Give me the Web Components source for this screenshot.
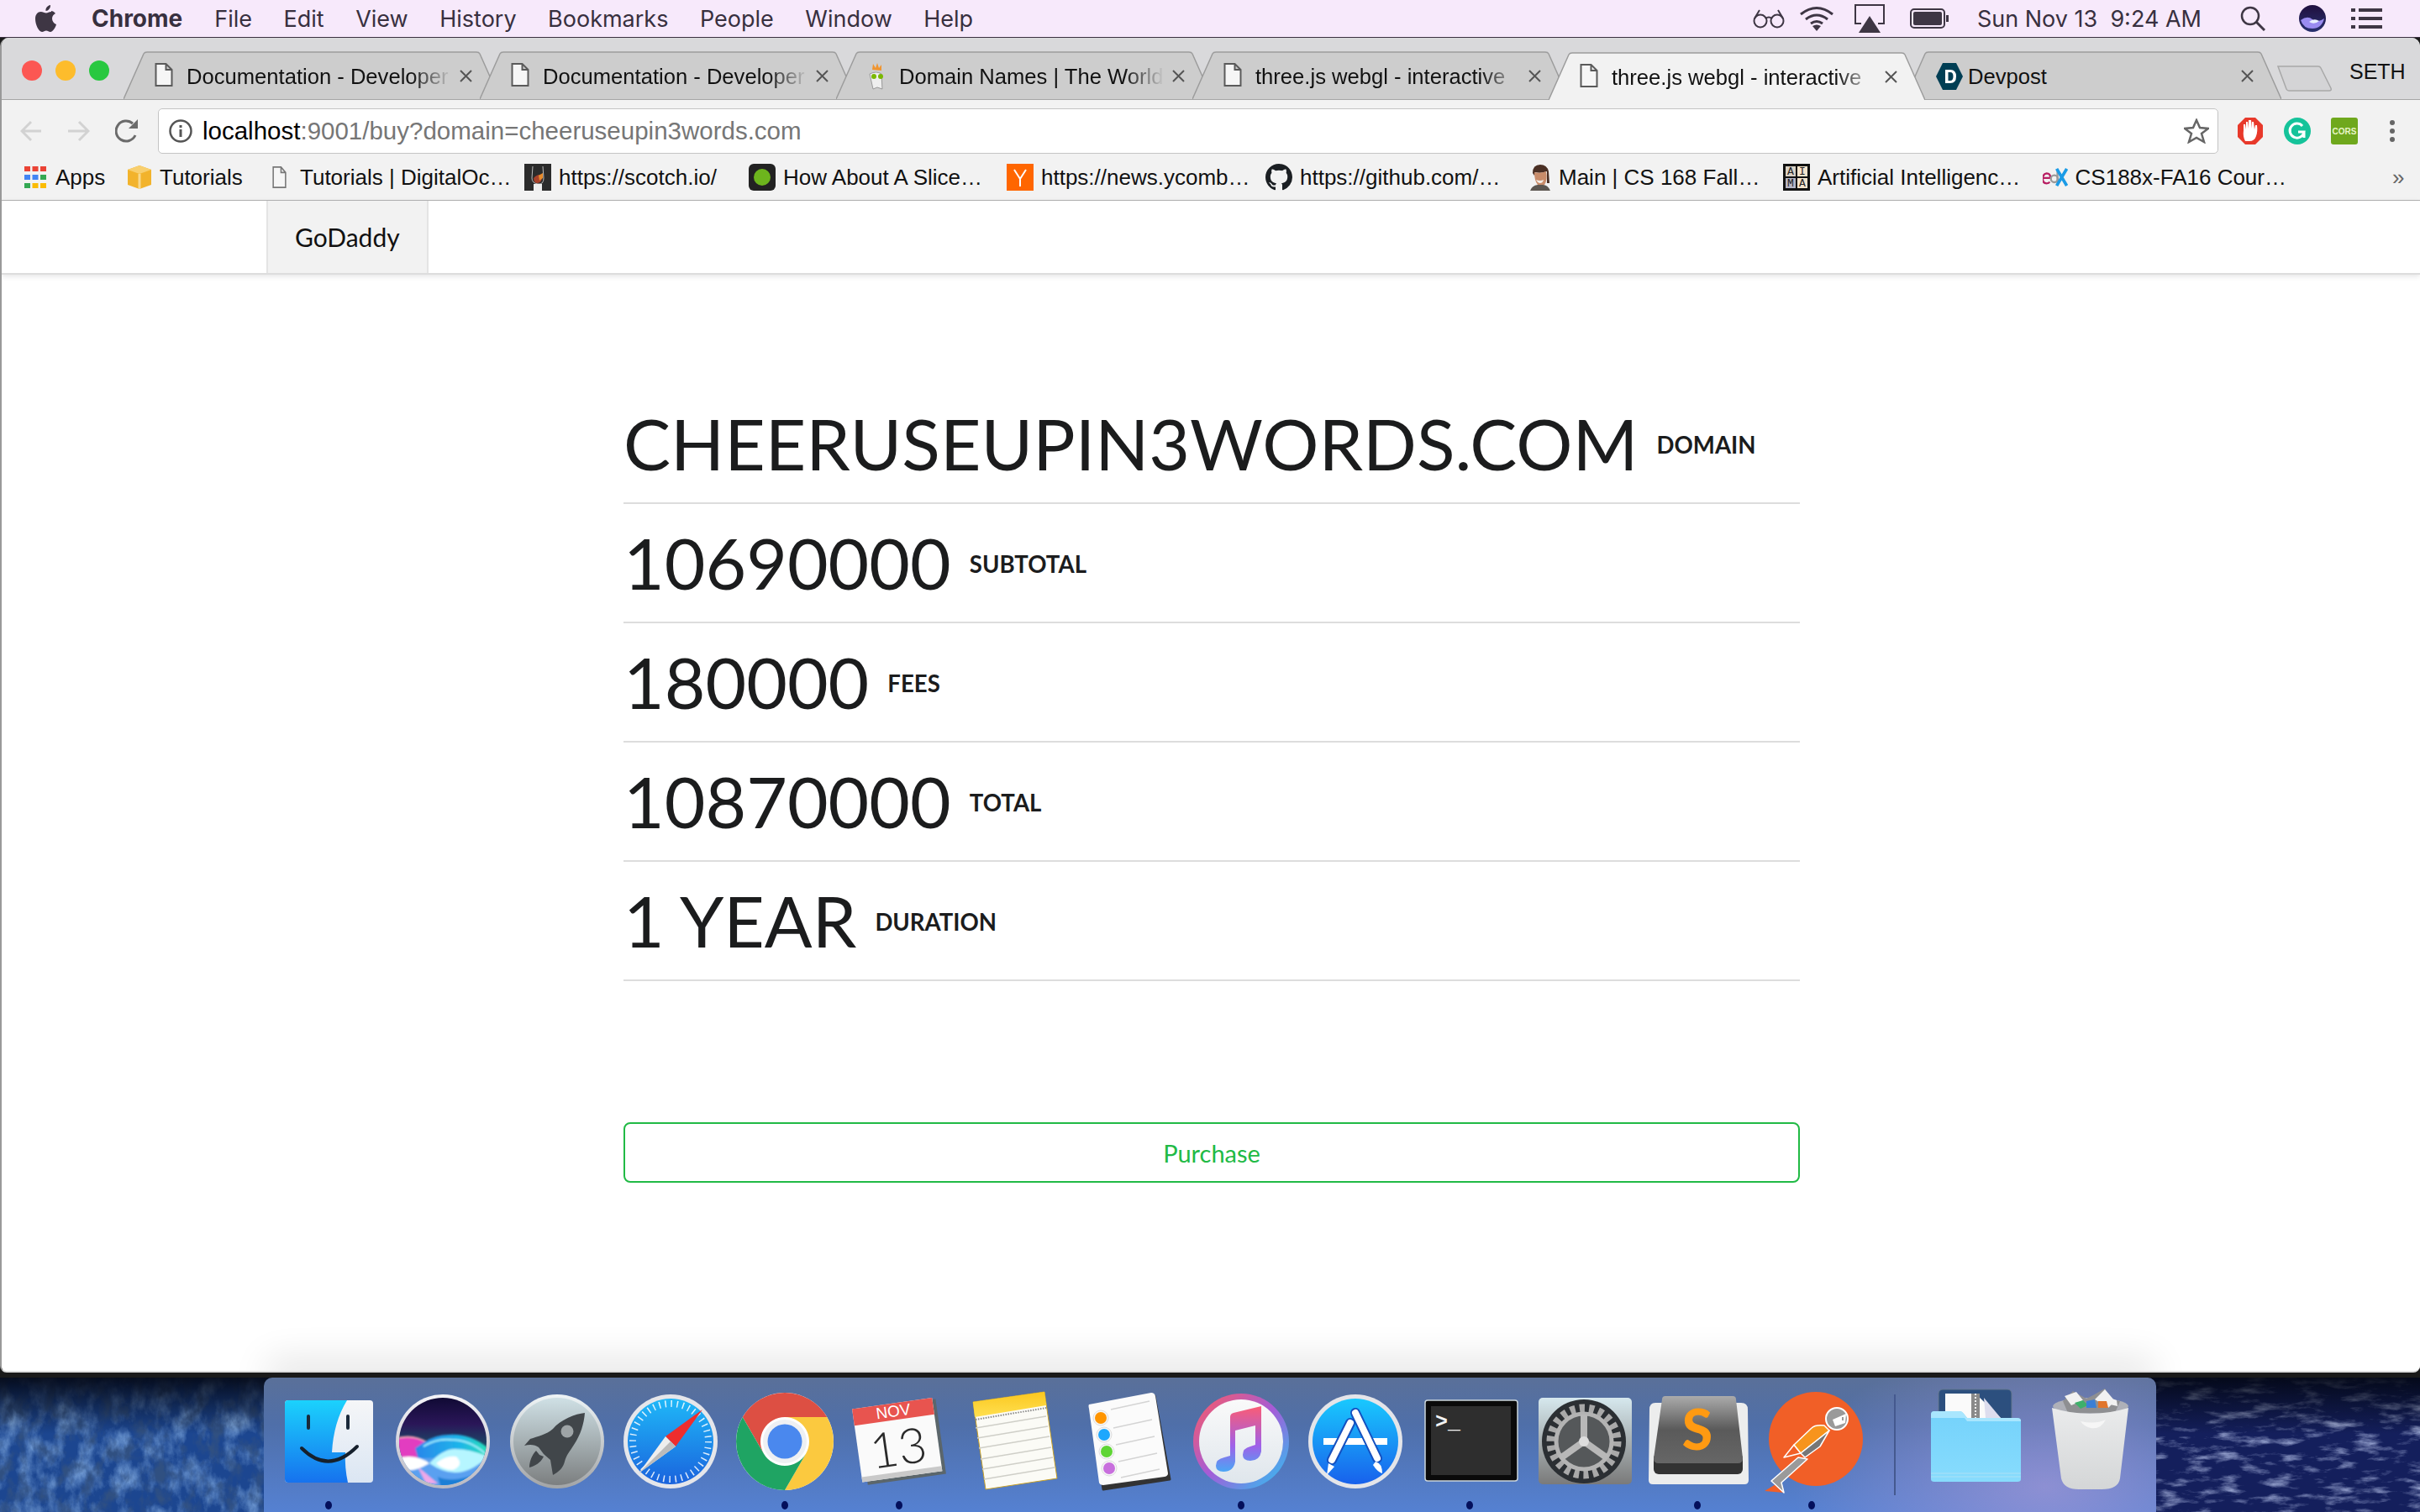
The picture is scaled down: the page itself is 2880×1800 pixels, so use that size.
<!DOCTYPE html>
<html>
<head>
<meta charset="utf-8">
<title>Buy domain</title>
<style>
  html, body { margin: 0; width: 2880px; height: 1800px; overflow: hidden; background: #1a1a1a; }
  body { display: flex; flex-direction: column; font-family: "Liberation Sans", sans-serif; }
  svg { display: block; }
  svg text { font-family: "Liberation Sans", sans-serif; }
</style>
</head>
<body>

<mac-menubar></mac-menubar>

<browser-window>
  <tab-strip>
    <browser-tab label="Documentation - Developer"></browser-tab>
    <browser-tab label="Documentation - Developer"></browser-tab>
    <browser-tab label="Domain Names | The World">
      <svg slot="icon" width="24" height="34" viewBox="0 0 24 34"><path d="M3 14q8-4 14 0l1 18-6-2-5 2z" fill="#eee" stroke="#999"/><path d="M6 9l1-7 3 5 2-6 2 6 3-4 0 7z" fill="#f0952f"/><circle cx="8" cy="17" r="3" fill="#7ab800"/><circle cx="16" cy="17" r="3" fill="#7ab800"/></svg>
    </browser-tab>
    <browser-tab label="three.js webgl - interactive"></browser-tab>
    <browser-tab active label="three.js webgl - interactive"></browser-tab>
    <browser-tab label="Devpost" plain>
      <svg slot="icon" width="32" height="34" viewBox="0 0 32 34"><path d="M8 1h16l8 16-8 16H8L0 17z" fill="#003e54"/><path d="M11 9h6q7 0 7 8t-7 8h-6zM14.500 12v10h2.500q3.500 0 3.500-5t-3.500-5z" fill="#fff" fill-rule="evenodd"/></svg>
    </browser-tab>
  </tab-strip>

  <browser-toolbar url-host="localhost" url-rest=":9001/buy?domain=cheeruseupin3words.com"></browser-toolbar>

  <bookmark-bar>
    <book-mark w="123" label="Apps">
      <svg slot="icon" width="26" height="26" viewBox="0 0 26 26" style="margin-right:2px"><g fill="#ea4335"><rect width="7" height="6"/><rect x="9.500" width="7" height="6"/><rect x="19" width="7" height="6"/></g><g fill="#4285f4"><rect y="10" width="7" height="6"/><rect x="9.500" y="10" width="7" height="6"/></g><rect x="19" y="10" width="7" height="6" fill="#34a853"/><g fill="#34a853"><rect y="20" width="7" height="6"/></g><g fill="#fbbc05"><rect x="9.500" y="20" width="7" height="6"/><rect x="19" y="20" width="7" height="6"/></g></svg>
    </book-mark>
    <book-mark w="172" label="Tutorials">
      <svg slot="icon" width="28" height="28" viewBox="0 0 28 28" style="margin-right:1px"><path d="M14 0l14 5v18l-14 5-14-5V5z" fill="#f2b32c"/><path d="M0 5l14 5 14-5-14-5z" fill="#f8cf6e"/><path d="M12.500 10h3v18h-3z" fill="#f8d98e"/></svg>
    </book-mark>
    <book-mark w="300" label="Tutorials | DigitalOc…"></book-mark>
    <book-mark w="267" label="https://scotch.io/">
      <svg slot="icon" width="32" height="32" viewBox="0 0 32 32"><rect width="32" height="32" fill="#2b2b2b"/><path d="M10 3l-1 14q0 6 7 7t7-7L22 3" fill="none" stroke="#bbb"/><path d="M11 17q5-5 10-4 1 9-5 10-5 0-5-6z" fill="#a8412a"/><path d="M17 14l5-3 0 6-4 3z" fill="#e58a2b"/><rect x="11" y="24" width="10" height="8" fill="#eee"/></svg>
    </book-mark>
    <book-mark w="307" label="How About A Slice…">
      <svg slot="icon" width="32" height="32" viewBox="0 0 32 32"><rect width="32" height="32" rx="6" fill="#222"/><circle cx="16" cy="16" r="10" fill="#6db51d"/></svg>
    </book-mark>
    <book-mark w="308" label="https://news.ycomb…">
      <svg slot="icon" width="32" height="32" viewBox="0 0 32 32"><rect width="32" height="32" fill="#ff6600"/><path d="M9 7l7 11 7-11M16 18v9" fill="none" stroke="#fff" stroke-width="2"/></svg>
    </book-mark>
    <book-mark w="312" label="https://github.com/…">
      <svg slot="icon" width="32" height="32" viewBox="0 0 16 16"><path fill="#1b1f23" d="M8 0C3.580 0 0 3.580 0 8c0 3.540 2.290 6.530 5.470 7.590.4.070.55-.17.55-.38 0-.19-.01-.82-.01-1.490-2.010.37-2.530-.49-2.690-.94-.09-.23-.48-.94-.82-1.130-.28-.15-.68-.52-.01-.53.63-.01 1.080.58 1.230.82.720 1.210 1.870.870 2.330.660.070-.520.280-.870.510-1.070-1.780-.2-3.640-.89-3.640-3.950 0-.870.310-1.590.820-2.150-.08-.2-.36-1.020.08-2.120 0 0 .67-.21 2.200.82.640-.18 1.320-.27 2-.27s1.360.09 2 .27c1.530-1.040 2.200-.82 2.200-.82.440 1.100.160 1.920.080 2.120.510.560.820 1.270.820 2.150 0 3.070-1.870 3.750-3.650 3.950.290.250.540.730.540 1.480 0 1.070-.01 1.930-.01 2.200 0 .210.150.460.550.380A8.010 8.010 0 0 0 16 8c0-4.420-3.580-8-8-8z"/></svg>
    </book-mark>
    <book-mark w="304" label="Main | CS 168 Fall…">
      <svg slot="icon" width="28" height="32" viewBox="0 0 28 32"><rect width="28" height="32" fill="#f2f2f2"/><path d="M6 11Q6 1 15 1q8 0 10 8l1 14h-3V9q-7 3-14 1l-1 4z" fill="#4a2f24"/><path d="M8 10q7 2 14-1 2 10-2 16-4 3-8 0-4-5-4-15z" fill="#c98c6a"/><path d="M10 19q5 2 9 0-1 4-4 4t-5-4z" fill="#f2ece5"/><path d="M3 32q2-6 9-7h6q6 0 9 7z" fill="#5c5650"/></svg>
    </book-mark>
    <book-mark w="309" label="Artificial Intelligenc…">
      <svg slot="icon" width="32" height="32" viewBox="0 0 32 32"><rect width="32" height="32" fill="#111"/><rect x="3" y="3" width="12" height="12" fill="#d9d2c6"/><rect x="17" y="3" width="12" height="12" fill="#f4e4cc"/><rect x="3" y="17" width="12" height="12" fill="#b6b6c6"/><rect x="17" y="17" width="12" height="12" fill="#f4e4cc"/><g font-size="13" fill="#222" text-anchor="middle"><text x="9" y="13" style="font-family:'Liberation Mono'">A</text><text x="23" y="13" style="font-family:'Liberation Mono'">I</text><text x="9" y="27" style="font-family:'Liberation Mono'">M</text><text x="23" y="27" style="font-family:'Liberation Mono'">A</text></g></svg>
    </book-mark>
    <book-mark w="290" label="CS188x-FA16 Cour…">
      <svg slot="icon" width="32" height="28" viewBox="0 0 32 28"><path d="M1 15h9q0-6-5-6-5 1-5 7 0 6 5 6 3 0 4-2" fill="none" stroke="#b81f63" stroke-width="2.500"/><circle cx="15" cy="16" r="4.500" fill="none" stroke="#9a9a9a" stroke-width="2.500"/><path d="M19 5v17" stroke="#9a9a9a" stroke-width="2.500"/><path d="M18 3l13 22M31 3L18 25" stroke="#1b9be6" stroke-width="4"/></svg>
    </book-mark>
    <span style="color:#666;font-size:26px;line-height:32px;margin-left:126px">»</span>
  </bookmark-bar>

  <page-nav brand="GoDaddy"></page-nav>

  <page-main>
    <stat-row value="CHEERUSEUPIN3WORDS.COM" label="DOMAIN"></stat-row>
    <stat-row value="10690000" label="SUBTOTAL"></stat-row>
    <stat-row value="180000" label="FEES"></stat-row>
    <stat-row value="10870000" label="TOTAL"></stat-row>
    <stat-row value="1 YEAR" label="DURATION"></stat-row>
    <purchase-button>Purchase</purchase-button>
  </page-main>
</browser-window>

<mac-dock>
  <dock-item running>
    <svg width="136" height="146" viewBox="0 0 136 146"><defs><linearGradient id="fb" x1="0" y1="0" x2="0" y2="1"><stop offset="0" stop-color="#1bd2fd"/><stop offset="1" stop-color="#1672ee"/></linearGradient><linearGradient id="fw" x1="0" y1="0" x2="0" y2="1"><stop offset="0" stop-color="#f5f6f8"/><stop offset="1" stop-color="#dbe6f3"/></linearGradient></defs>
      <rect x="16" y="27" width="105" height="98" rx="4" fill="url(#fw)"/>
      <path d="M20 27h70q-16 26-18 62h16q-1 18 3 36H20q-4 0-4-4V31q0-4 4-4z" fill="url(#fb)"/>
      <path d="M44 46v14M91 46v14" stroke="#1a2a3a" stroke-width="4" stroke-linecap="round"/>
      <path d="M36 84q32 32 66-2" fill="none" stroke="#16202c" stroke-width="4" stroke-linecap="round"/>
    </svg>
  </dock-item>
  <dock-item>
    <svg width="136" height="146" viewBox="0 0 136 146"><defs><linearGradient id="sr" x1="0" y1="0" x2="0" y2="1"><stop offset="0" stop-color="#100a34"/><stop offset=".3" stop-color="#2a1658"/><stop offset=".55" stop-color="#1c4a68"/><stop offset="1" stop-color="#2e8ce8"/></linearGradient><linearGradient id="sc" x1="0" y1="0" x2="1" y2="0"><stop offset="0" stop-color="#2a86ea"/><stop offset=".6" stop-color="#1eb4ea"/><stop offset="1" stop-color="#28e0b8"/></linearGradient><linearGradient id="sg" x1="0" y1="0" x2="0" y2="1"><stop offset="0" stop-color="#f4f4f8"/><stop offset="1" stop-color="#b9b9c2"/></linearGradient><clipPath id="src"><circle cx="68" cy="76" r="52"/></clipPath><filter id="sb1"><feGaussianBlur stdDeviation=".8"/></filter></defs>
      <circle cx="68" cy="76" r="56" fill="url(#sg)"/><circle cx="68" cy="76" r="52" fill="url(#sr)"/>
      <g clip-path="url(#src)" filter="url(#sb1)">
        <path d="M14 72Q32 66 50 78 62 86 72 96L50 104Q30 96 14 94z" fill="#e23cc0"/>
        <path d="M14 72q20-5 36 6" fill="none" stroke="#f4a0b0" stroke-width="2"/>
        <path d="M35 84Q55 68 75 68 100 66 122 84V102H40z" fill="url(#sc)"/>
        <path d="M45 82Q60 72 78 74 100 74 118 90" fill="none" stroke="#9ff0ff" stroke-width="2"/>
        <path d="M14 96H122V130H14z" fill="#5aa0f0"/>
        <path d="M38 106l24 20h-14z" fill="#f0a8e8"/>
        <path d="M14 96Q35 90 52 102 35 112 26 110 18 104 14 96z" fill="#fff"/>
        <path d="M52 102Q68 85 82 85 100 85 122 94 100 114 82 113 68 113 52 102z" fill="#b6f6ff"/>
        <path d="M60 102Q72 92 84 94 94 104 80 110 68 110 60 102z" fill="#fff"/>
        <path d="M62 118Q80 126 110 114L100 132H66z" fill="#1f7fd6"/>
      </g>
    </svg>
  </dock-item>
  <dock-item>
    <svg width="136" height="146" viewBox="0 0 136 146"><defs><linearGradient id="lp" x1="0" y1="0" x2="0" y2="1"><stop offset="0" stop-color="#cfe0e5"/><stop offset="1" stop-color="#7c7f80"/></linearGradient><linearGradient id="lr" x1="0" y1="0" x2="0" y2="1"><stop offset="0" stop-color="#eef4f6"/><stop offset="1" stop-color="#a2a4a6"/></linearGradient></defs>
      <circle cx="68" cy="76" r="56" fill="url(#lr)"/><circle cx="68" cy="76" r="52" fill="url(#lp)"/>
      <path d="M101 42C90 43 72 50 63 61 55 68 45 70 36 73L29 81C36 79 42 80 46 83L52 91 60 98 63 116C70 112 75 108 77 100 79 92 83 88 88 80 96 68 100 55 101 42z" fill="#41464a"/>
      <path d="M43 87C38 92 35 100 35 107 42 105 48 102 52 94L47 92z" fill="#41464a"/>
      <circle cx="80" cy="64" r="7.500" fill="#9ea4a6"/>
    </svg>
  </dock-item>
  <dock-item>
    <svg width="136" height="146" viewBox="0 0 136 146"><defs><linearGradient id="sf" x1="0" y1="0" x2="0" y2="1"><stop offset="0" stop-color="#1fb8f8"/><stop offset="1" stop-color="#1a63dd"/></linearGradient></defs>
      <circle cx="68" cy="76" r="56" fill="#e5e6ea"/><circle cx="68" cy="76" r="51" fill="url(#sf)"/>
      <circle cx="68" cy="76" r="45" fill="none" stroke="#fff" stroke-width="8" stroke-dasharray="1.500 5.570" opacity=".85"/>
      <path d="M106 38L74 82 62 70z" fill="#ee2d2d"/><path d="M30 114L62 70 74 82z" fill="#eee"/><path d="M30 114L74 82 68 76z" fill="#bbb"/>
    </svg>
  </dock-item>
  <dock-item running>
    <svg width="136" height="146" viewBox="0 0 136 146">
      <g transform="translate(68 76)"><circle r="58" fill="#fff"/>
        <path d="M-50.200-29A58 58 0 0 1 50.200-29L0-29A29 29 0 0 0-25.100 14.500Z" fill="#dd4f43"/>
        <path d="M-50.200-29A58 58 0 0 1 50.200-29L0-29A29 29 0 0 0-25.100 14.500Z" fill="#fbc93f" transform="rotate(120)"/>
        <path d="M-50.200-29A58 58 0 0 1 50.200-29L0-29A29 29 0 0 0-25.100 14.500Z" fill="#1fa463" transform="rotate(240)"/>
        <circle r="26" fill="#eef0f3"/><circle r="20.500" fill="#4a88ee"/></g>
    </svg>
  </dock-item>
  <dock-item running>
    <svg width="136" height="146" viewBox="0 0 136 146">
      <g transform="rotate(-8 68 76)"><rect x="24" y="32" width="94" height="90" fill="#5b666b"/><rect x="18" y="30" width="96" height="88" fill="#fafafa"/><rect x="18" y="112" width="96" height="6" fill="#c9c9c9"/><path d="M18 30h96v20H18z" fill="#e8544f"/>
        <text x="66" y="46" font-size="19" fill="#fff" text-anchor="middle">NOV</text>
        <text x="66" y="104" font-size="58" fill="#2a2a2a" text-anchor="middle" style="font-family:Lato;font-weight:300">13</text></g>
    </svg>
  </dock-item>
  <dock-item>
    <svg width="136" height="146" viewBox="0 0 136 146"><defs><linearGradient id="ny" x1="0" y1="0" x2="0" y2="1"><stop offset="0" stop-color="#fbc71f"/><stop offset="1" stop-color="#ffe050"/></linearGradient></defs>
      <path d="M20 29L105 17 120 120 35 133z" fill="#fbfbf6" stroke="#c9a227"/><path d="M20 29L105 17 107 33 22 47z" fill="url(#ny)"/>
      <path d="M23 50l84-14" stroke="#888" stroke-width="2" stroke-dasharray="1.500 1.500"/>
      <path d="M23 60l84-14M25 72l84-14M27 84l84-14M29 97l84-14M31 109l84-14M33 121l84-14" stroke="#cfcfc8" stroke-width="1.500" fill="none"/>
    </svg>
  </dock-item>
  <dock-item>
    <svg width="136" height="146" viewBox="0 0 136 146">
      <path d="M25 35L101 22 119 121 40 133z" fill="#333" stroke="#333" stroke-width="3" stroke-linejoin="round"/>
      <path d="M23 32L97 18Q101 18 102 22L117 114Q117 117 113 118L40 128Q36 128 35 125L23 37Q22 33 23 32z" fill="#fbfbfb"/>
      <g stroke="#ddd" stroke-width="1"><circle cx="37" cy="48" r="9" fill="#f7f7f7"/><circle cx="41" cy="68" r="9" fill="#f7f7f7"/><circle cx="44" cy="88" r="9" fill="#f7f7f7"/><circle cx="47" cy="108" r="9" fill="#f7f7f7"/></g>
      <circle cx="37" cy="48" r="7" fill="#ff9500"/><circle cx="41" cy="68" r="7" fill="#1ea7fd"/><circle cx="44" cy="88" r="7" fill="#5fd534"/><circle cx="47" cy="108" r="7" fill="#c86fdd"/>
      <path d="M49 38l46-10M52 60l46-10M55 80l46-10M58 100l46-10M61 119l46-10" stroke="#d4d4d4" stroke-width="1.500"/>
    </svg>
  </dock-item>
  <dock-item running>
    <svg width="136" height="146" viewBox="0 0 136 146"><defs><linearGradient id="it" x1="0" y1="0" x2="1" y2="1"><stop offset="0" stop-color="#ff5a5f"/><stop offset=".5" stop-color="#a45cd8"/><stop offset="1" stop-color="#25c9f4"/></linearGradient><linearGradient id="nt" x1="0" y1="0" x2="0" y2="1"><stop offset="0" stop-color="#fb5c74"/><stop offset=".6" stop-color="#a060e8"/><stop offset="1" stop-color="#4aa6f5"/></linearGradient><linearGradient id="iw" x1="0" y1="0" x2="0" y2="1"><stop offset="0" stop-color="#fafafa"/><stop offset="1" stop-color="#dfe6ec"/></linearGradient></defs>
      <circle cx="68" cy="76" r="57" fill="url(#it)"/><circle cx="68" cy="76" r="50" fill="url(#iw)"/>
      <path d="M55 47q0-4 4-5l33-8v54q-2 11-13 11-9 0-9-7 0-8 9-10l6-2V57l-24 6v37q-2 12-14 12-9 0-9-7 0-8 10-10l7-2z" fill="url(#nt)"/>
    </svg>
  </dock-item>
  <dock-item>
    <svg width="136" height="146" viewBox="0 0 136 146"><defs><linearGradient id="as" x1="0" y1="0" x2="0" y2="1"><stop offset="0" stop-color="#19c9fe"/><stop offset="1" stop-color="#1861ec"/></linearGradient></defs>
      <circle cx="68" cy="76" r="56" fill="#e4e5e9"/><circle cx="68" cy="76" r="51" fill="url(#as)"/>
      <path d="M30 72h76v8H30z" fill="#fff"/>
      <path d="M62 54L40 98" stroke="#1450c0" stroke-width="12" stroke-linecap="round"/><path d="M62 54L40 98" stroke="#fff" stroke-width="8" stroke-linecap="round"/><path d="M36 102l-2 14 9-10z" fill="#fff"/>
      <path d="M68 42L94 96" stroke="#1450c0" stroke-width="12" stroke-linecap="round"/><path d="M68 42L94 96" stroke="#fff" stroke-width="8" stroke-linecap="round"/><path d="M92 100q8 2 8 14-6-2-11-10z" fill="#fff"/>
    </svg>
  </dock-item>
  <dock-item running>
    <svg width="136" height="146" viewBox="0 0 136 146">
      <rect x="15" y="27" width="110" height="96" rx="3" fill="#0a0a0a" stroke="#ccd6dc" stroke-width="1.500"/><rect x="22" y="34" width="95" height="82" fill="#2e2e2e"/>
      <text x="27" y="60" font-size="25" font-weight="700" fill="#f2f2f2" style="font-family:'Liberation Mono'">&gt;_</text>
    </svg>
  </dock-item>
  <dock-item>
    <svg width="136" height="146" viewBox="0 0 136 146"><defs><linearGradient id="sp" x1="0" y1="0" x2="0" y2="1"><stop offset="0" stop-color="#d6e8ee"/><stop offset=".5" stop-color="#a8b0b2"/><stop offset="1" stop-color="#7a7a7a"/></linearGradient></defs>
      <rect x="14" y="24" width="111" height="103" rx="5" fill="url(#sp)"/><circle cx="68" cy="76" r="50" fill="#2b2f33"/>
      <circle cx="68" cy="76" r="39" fill="none" stroke="#a9a9a9" stroke-width="11" stroke-dasharray="6 5.150"/><circle cx="68" cy="76" r="33" fill="#55585a" stroke="#b3b3b3" stroke-width="5"/>
      <path d="M68 76V44M68 76L40 96M68 76L96 96" stroke="#b8b8b8" stroke-width="8" fill="none"/><circle cx="68" cy="76" r="6" fill="#ddd"/>
    </svg>
  </dock-item>
  <dock-item running>
    <svg width="136" height="146" viewBox="0 0 136 146"><defs><linearGradient id="sb" x1="0" y1="0" x2="0" y2="1"><stop offset="0" stop-color="#ababab"/><stop offset=".5" stop-color="#5a5a5a"/><stop offset="1" stop-color="#666"/></linearGradient></defs>
      <path d="M18 30H120q8 0 8 8l1 84q0 5-5 5H15q-5 0-5-5l1-84q0-8 7-8z" fill="#eceded"/>
      <rect x="16" y="90" width="106" height="25" rx="6" fill="#333"/>
      <path d="M26 26q0-4 4-4h80q4 0 4 4l8 70q0 6-6 6H22q-6 0-6-6z" fill="url(#sb)"/>
      <text x="68" y="86" font-size="66" font-weight="900" fill="#ff9a12" text-anchor="middle" style="font-family:Lato">S</text>
    </svg>
  </dock-item>
  <dock-item running>
    <svg width="136" height="146" viewBox="0 0 136 146">
      <circle cx="73" cy="73" r="56" fill="#f15f27"/><path d="M12 135l15-9 8 11z" fill="#f15f27"/>
      <path d="M52 95L20 123 35 137 32 125 63 97z" fill="#9a9a9a" stroke="#fff" stroke-width="1.500" stroke-linejoin="round"/>
      <path d="M47 80L35 95 55 90z" fill="#f15f27" stroke="#fff" stroke-width="1.500" stroke-linejoin="round"/>
      <path d="M83 57Q72 56 68 60L47 80 55 90 89 63z" fill="#f7941d" stroke="#fff" stroke-width="1.500" stroke-linejoin="round"/>
      <path d="M89 63L78 82 60 95 55 90z" fill="#777" stroke="#fff" stroke-width="1.500" stroke-linejoin="round"/>
      <circle cx="98" cy="49" r="13" fill="#9a9a9a" stroke="#fff" stroke-width="2"/>
      <path d="M93 50L109 43 108 54 96 58z" fill="#fff"/><path d="M105 47v4" stroke="#777" stroke-width="1.500"/>
    </svg>
  </dock-item>
  <dock-sep></dock-sep>
  <dock-item>
    <svg width="136" height="146" viewBox="0 0 136 146"><defs><linearGradient id="fd" x1="0" y1="0" x2="0" y2="1"><stop offset="0" stop-color="#74d2fb"/><stop offset="1" stop-color="#88dcfd"/></linearGradient></defs>
      <rect x="22" y="14" width="87" height="40" rx="5" fill="#2c4f7e" stroke="#64788f"/>
      <path d="M30 19H66L96 48V60H30z" fill="#fafafa"/><path d="M76 24L96 48H78z" fill="#dde"/>
      <path d="M61 19h10v40h-10z" fill="#8a8a8a"/><path d="M66 19v40" stroke="#eee" stroke-width="2" stroke-dasharray="2 2"/>
      <path d="M17 40h30q3 0 5 3l4 5h59q5 0 5 4v69q0 3-4 3H17q-4 0-4-3V44q0-4 4-4z" fill="url(#fd)"/><path d="M13 48h40l3 4h64v-1q0-3-5-3H56l-4-5q-2-3-5-3H17q-4 0-4 4z" fill="#a9e6fe"/><path d="M13 114h107M13 118h107" stroke="#a0e0f8" stroke-width="1.500"/>
    </svg>
  </dock-item>
  <dock-item>
    <svg width="136" height="146" viewBox="0 0 136 146"><defs><linearGradient id="tr" x1="0" y1="0" x2="0" y2="1"><stop offset="0" stop-color="#eaebec"/><stop offset="1" stop-color="#d4d6d7"/></linearGradient></defs>
      <ellipse cx="67" cy="34" rx="45" ry="10" fill="#aeb0b8"/>
      <path d="M34 28l12-12 16 9 8-4 14-8 8 13 10 2-6 14H40z" fill="#8e8f92"/>
      <path d="M36 22l14-5 8 10-14 6zM72 26l12-12 12 14-8 8zM90 24l8 3 1 7-9-2z" fill="#f1f1f1"/>
      <path d="M48 30l10-3 6 6-9 4z" fill="#3eb06a"/><path d="M62 28l10-2 2 10H62z" fill="#3a7fd6"/><path d="M76 28h10l2 8H76z" fill="#e0752c"/>
      <path d="M21 36Q66 50 112 36L102 120Q100 133 80 133H53Q35 133 32 120z" fill="url(#tr)"/>
      <path d="M55 52q18 4 30-2-6 12-18 10-8-2-12-8z" fill="#f6f6f6"/>
    </svg>
  </dock-item>
</mac-dock>

<script>
const DOC_ICON = `<svg width="22" height="28" viewBox="0 0 22 28"><path d="M1.500 1h12l7 7v19h-19zM13.500 1v7h7" fill="#f6f6f6" stroke="#5a5a5a" stroke-width="2"/></svg>`;

class MacMenubar extends HTMLElement {
  constructor() {
    super();
    this.attachShadow({ mode: 'open' }).innerHTML = `
      <style>
        :host { display: flex; align-items: center; height: 44px; flex: none; background: #f7e9fb; color: #38303f; border-bottom: 1px solid #3b3040; font: 27px Inter, "Noto Sans", sans-serif; padding-left: 41px; }
        .apple { width: 28px; margin-right: 40px; }
        b { font-weight: 700; font-size: 28px; margin-right: 38px; }
        span.m { margin-right: 37.500px; }
        .right { display: flex; align-items: center; margin-left: auto; }
      </style>
      <svg class="apple" viewBox="0 0 28 34" height="34"><path fill="#3e3644" d="M20 9c-3 0-4 1.500-6 1.500S10 9 7.500 9C4 9 1 12 1 17.500 1 24 5 33 9 33c2 0 3-1.500 5-1.500s3 1.500 5 1.500c3 0 6-5.500 7-9-3-1-5-4-5-7 0-3 2-5 4-6-1.500-2-3.500-3-5-3zM19 1c-3 .5-6 3-5.500 7 3 0 6-3.500 5.500-7z"/></svg>
      <b>Chrome</b><span class="m">File</span><span class="m">Edit</span><span class="m">View</span><span class="m">History</span><span class="m">Bookmarks</span><span class="m">People</span><span class="m">Window</span><span class="m">Help</span>
      <div class="right">
        <svg width="38" height="24" viewBox="0 0 38 24" style="margin-right:17px"><g fill="none" stroke="#3e3644" stroke-width="2"><circle cx="9" cy="15" r="7.500"/><circle cx="29" cy="15" r="7.500"/><path d="M15 12q4-3 8 0M2 12L8 2M36 12L30 2"/></g></svg>
        <svg width="42" height="30" viewBox="0 0 42 30" style="margin-right:24px"><g fill="none" stroke="#3e3644" stroke-width="3"><path d="M2 10q19-15 38 0M8 16q13-10 26 0M14 21q7-5 14 0"/></g><path d="M21 30l-5-6q5-3 10 0z" fill="#3e3644"/></svg>
        <svg width="36" height="34" viewBox="0 0 36 34" style="margin-right:30px"><path d="M8 23H1V1h34v22h-7" fill="none" stroke="#3e3644" stroke-width="2"/><path d="M18 14l13 20H5z" fill="#3e3644"/></svg>
        <svg width="46" height="24" viewBox="0 0 46 24" style="margin-right:34px"><rect x="1" y="1" width="40" height="22" rx="4" fill="none" stroke="#3e3644" stroke-width="2"/><rect x="4" y="4" width="34" height="16" rx="2" fill="#3e3644"/><rect x="43" y="8" width="3" height="8" fill="#3e3644"/></svg>
        <span style="margin-right:46px">Sun Nov 13&nbsp; 9:24 AM</span>
        <svg width="30" height="30" viewBox="0 0 30 30" style="margin-right:40px"><circle cx="12" cy="12" r="10" fill="none" stroke="#3e3644" stroke-width="2.500"/><path d="M19 19l10 10" stroke="#3e3644" stroke-width="3"/></svg>
        <svg width="32" height="32" viewBox="0 0 32 32" style="margin-right:30px"><defs><linearGradient id="ms" x1="0" y1="0" x2="0" y2="1"><stop offset="0" stop-color="#20103f"/><stop offset="1" stop-color="#28306f"/></linearGradient></defs><circle cx="16" cy="16" r="16" fill="url(#ms)"/><path d="M2 18q8-6 14-1t14-1q-3 12-14 12T2 18z" fill="#9a8cf0"/><path d="M12 20q6-5 12-1-6 5-12 1z" fill="#e9f0ff"/></svg>
        <svg width="37" height="24" viewBox="0 0 37 24" style="margin-right:45px"><g fill="#3e3644"><rect width="5" height="4"/><rect x="9" width="28" height="4"/><rect y="10" width="5" height="4"/><rect x="9" y="10" width="28" height="4"/><rect y="20" width="5" height="4"/><rect x="9" y="20" width="28" height="4"/></g></svg>
      </div>`;
  }
}

class BrowserWindow extends HTMLElement {
  constructor() {
    super();
    this.attachShadow({ mode: 'open' }).innerHTML = `
      <style>
        :host { display: flex; flex-direction: column; height: 1589px; flex: none; background: #fff; border-left: 2px solid #999; border-bottom: 2px solid #ddd; box-sizing: border-box; border-radius: 10px 10px 8px 8px; overflow: hidden; }
      </style>
      <slot></slot>`;
  }
}

class TabStrip extends HTMLElement {
  constructor() {
    super();
    this.attachShadow({ mode: 'open' }).innerHTML = `
      <style>
        :host { display: flex; align-items: flex-end; height: 74px; flex: none; box-sizing: border-box; background: #d9d9db; border-bottom: 1px solid #a6a6a6; padding-left: 145px; position: relative; }
        .dots { position: absolute; left: 24px; top: 27px; display: flex; gap: 16px; }
        .dots i { width: 24px; height: 24px; border-radius: 50%; }
        .new { margin: 0 0 9px 19px; flex: none; }
        .user { margin: 0 0 19px 21px; font-size: 25px; line-height: 28px; color: #111; }
      </style>
      <div class="dots"><i style="background:#fc5753"></i><i style="background:#fdbc2c"></i><i style="background:#28c840"></i></div>
      <slot></slot>
      <svg class="new" width="65" height="31" viewBox="0 0 65 31"><path d="M1 1H49Q51 1 52 3L64 27Q65 30 62 30H14Q12 30 11 28z" fill="#d4d4d6" stroke="#a8a8a8" stroke-width="1.500"/></svg>
      <span class="user">SETH</span>`;
  }
}

class BrowserTab extends HTMLElement {
  constructor() {
    super();
    const active = this.hasAttribute('active');
    const fade = this.hasAttribute('plain') ? '' : 'mask-image: linear-gradient(to right, #000 84%, transparent 99%);';
    this.attachShadow({ mode: 'open' }).innerHTML = `
      <style>
        :host { display: flex; align-items: center; width: 448px; height: 57px; flex: none; margin-right: -24px; position: relative; box-sizing: border-box; padding: 2px 33px 0 37px; ${active ? 'z-index: 1; margin-bottom: -1px;' : ''} }
        svg.shape { position: absolute; left: 0; top: 0; width: 100%; height: 100%; }
        .icon { position: relative; width: 38px; flex: none; }
        .title { position: relative; flex: 1; min-width: 0; white-space: nowrap; overflow: hidden; font-size: 25.600px; line-height: 34px; color: #111; ${fade} }
        .x { position: relative; width: 15px; margin-left: 6px; flex: none; }
      </style>
      <svg class="shape" viewBox="0 0 448 57" preserveAspectRatio="none"><path d="M0 57L24 3Q25 1 28 1H420Q423 1 424 3L448 57" fill="${active ? '#f2f2f2' : '#cdcdcd'}" stroke="#9c9c9c" stroke-width="1.500"/></svg>
      <div class="icon"><slot name="icon">${DOC_ICON}</slot></div>
      <div class="title">${this.getAttribute('label')}</div>
      <svg class="x" height="15" viewBox="0 0 15 15"><path d="M1 1l13 13M14 1L1 14" stroke="#555" stroke-width="2"/></svg>`;
  }
}

class BrowserToolbar extends HTMLElement {
  constructor() {
    super();
    this.attachShadow({ mode: 'open' }).innerHTML = `
      <style>
        :host { display: flex; align-items: center; height: 65px; flex: none; box-sizing: border-box; background: #f2f2f2; padding: 10px 0 1px 22px; }
        .omni { display: flex; align-items: center; width: 2452px; height: 54px; box-sizing: border-box; margin: 0 23px; padding: 0 10px 0 12px; background: #fff; border: 1.500px solid #c4c4c4; border-radius: 5px; }
        .url { font-size: 29.500px; color: #767676; margin-left: 12px; flex: 1; white-space: nowrap; }
        .url b { font-weight: 400; color: #000; }
      </style>
      <svg width="26" height="26" viewBox="0 0 26 26" style="margin-right:30px"><path d="M25 13H3M13 2L2 13l11 11" fill="none" stroke="#d2d2d2" stroke-width="3"/></svg>
      <svg width="27" height="26" viewBox="0 0 27 26" style="margin-right:30px"><path d="M1 13h22M14 2l11 11-11 11" fill="none" stroke="#d2d2d2" stroke-width="3"/></svg>
      <svg width="28" height="30" viewBox="0 0 28 30"><path d="M24 20A12 12 0 1 1 21 6" fill="none" stroke="#6b6b6b" stroke-width="3"/><path d="M27 1v11H16z" fill="#6b6b6b"/></svg>
      <div class="omni">
        <svg width="28" height="28" viewBox="0 0 28 28"><circle cx="14" cy="14" r="12.500" fill="none" stroke="#555" stroke-width="2.500"/><path d="M12.500 12h3v9h-3zM12.500 7h3v3h-3z" fill="#555"/></svg>
        <div class="url"><b>${this.getAttribute('url-host')}</b>${this.getAttribute('url-rest')}</div>
        <svg width="30" height="30" viewBox="0 0 30 30"><path d="M15 2l4 9 10 1-8 6 3 10-9-5-9 5 3-10-8-6 10-1z" fill="none" stroke="#666" stroke-width="2.500"/></svg>
      </div>
      <svg width="30" height="32" viewBox="0 0 30 32" style="margin-right:25px"><path d="M9 0h12l9 9v14l-9 9H9l-9-9V9z" fill="#e8392b"/><path d="M9 28q-3-5-2-13V8l2 0 1 6V5h2l1 8V3h3l1 10V5h2l1 9 1-5h2q1 8-1 13-2 6-8 6z" fill="#fff"/></svg>
      <svg width="32" height="32" viewBox="0 0 32 32" style="margin-right:24px"><circle cx="16" cy="16" r="16" fill="#15c39a"/><path d="M22 10A8.500 8.500 0 1 0 24 17H17M24 17v7" fill="none" stroke="#fff" stroke-width="3"/></svg>
      <svg width="32" height="32" viewBox="0 0 32 32" style="margin-right:38px"><rect width="32" height="32" rx="3" fill="#6fa81d"/><text x="16" y="20" font-size="10" font-weight="700" fill="#e8f5c8" text-anchor="middle" style="font-family:'Liberation Sans'">CORS</text></svg>
      <svg width="6" height="26" viewBox="0 0 6 26"><g fill="#666"><circle cx="3" cy="3" r="3"/><circle cx="3" cy="13" r="3"/><circle cx="3" cy="23" r="3"/></g></svg>`;
  }
}

class BookmarkBar extends HTMLElement {
  constructor() {
    super();
    this.attachShadow({ mode: 'open' }).innerHTML = `
      <style>
        :host { display: flex; align-items: center; height: 55px; flex: none; box-sizing: border-box; background: #f2f2f2; border-bottom: 1.500px solid #b4b4b4; padding-left: 27px; }
      </style>
      <slot></slot>`;
  }
}

class BookMark extends HTMLElement {
  constructor() {
    super();
    this.attachShadow({ mode: 'open' }).innerHTML = `
      <style>
        :host { display: flex; align-items: center; gap: 9px; flex: none; width: ${this.getAttribute('w')}px; height: 34px; white-space: nowrap; font-size: 26px; color: #111; }
        .doc { margin-right: 7px; }
      </style>
      <slot name="icon"><svg class="doc" width="17" height="26" viewBox="0 0 22 28" preserveAspectRatio="none"><path d="M1.500 1h12l7 7v19h-19zM13.500 1v7h7" fill="#f6f6f6" stroke="#777" stroke-width="2"/></svg></slot>
      <span>${this.getAttribute('label')}</span>`;
  }
}

class PageNav extends HTMLElement {
  constructor() {
    super();
    this.attachShadow({ mode: 'open' }).innerHTML = `
      <style>
        :host { display: flex; height: 88px; flex: none; box-sizing: border-box; background: #fff; border-bottom: 2px solid #ddd; box-shadow: 0 2px 6px rgba(34,36,38,.12); padding-left: 315px; position: relative; z-index: 1; }
        .item { display: flex; align-items: center; padding: 0 32px; background: #f2f2f2; border-left: 2px solid #e4e4e4; border-right: 2px solid #e4e4e4; font: 30px Lato, sans-serif; color: #111; }
      </style>
      <div class="item">${this.getAttribute('brand')}</div>`;
  }
}

class PageMain extends HTMLElement {
  constructor() {
    super();
    this.attachShadow({ mode: 'open' }).innerHTML = `
      <style>
        :host { display: flex; flex-direction: column; flex: 1; box-sizing: border-box; padding: 131px 0 0 740px; position: relative; background: #fff; }
        .shade { position: absolute; left: 330px; right: 330px; bottom: -8px; height: 8px; box-shadow: 0 0 44px 14px rgba(0,0,0,.11); }
      </style>
      <slot></slot>
      <div class="shade"></div>`;
  }
}

class StatRow extends HTMLElement {
  constructor() {
    super();
    this.attachShadow({ mode: 'open' }).innerHTML = `
      <style>
        :host { display: flex; align-items: center; gap: 22px; width: 1400px; box-sizing: border-box; height: 142px; border-bottom: 2px solid #ddd; font-family: Lato, sans-serif; color: #1b1c1d; }
        .value { font-size: 84px; line-height: 84px; }
        .label { font-size: 27.600px; font-weight: 700; margin-top: 2px; }
      </style>
      <span class="value">${this.getAttribute('value')}</span>
      <span class="label">${this.getAttribute('label')}</span>`;
  }
}

class PurchaseButton extends HTMLElement {
  constructor() {
    super();
    this.attachShadow({ mode: 'open' }).innerHTML = `
      <style>
        :host { display: block; width: 1400px; margin-top: 168px; }
        button { display: block; width: 100%; height: 72px; padding: 0; background: #fff; border: 2.500px solid #21ba45; border-radius: 8px; color: #21ba45; font: 400 29px Lato, sans-serif; }
      </style>
      <button><slot></slot></button>`;
  }
}

class MacDock extends HTMLElement {
  constructor() {
    super();
    this.attachShadow({ mode: 'open' }).innerHTML = `
      <style>
        :host { display: block; position: relative; flex: 1; background: #1a1a1a; padding-top: 6px; overflow: hidden; }
        .wall { position: absolute; left: 0; top: 6px; width: 2880px; height: 160px; }
        .bar { position: relative; display: flex; width: 2252px; height: 160px; margin-left: 314px; box-sizing: border-box; padding-left: 9px; border-radius: 10px 10px 0 0;
          background:
            radial-gradient(ellipse 300px 170px at 2120px 130px, rgba(160,150,215,.75), rgba(160,150,215,0)),
            linear-gradient(to bottom, #5a7099 0%, #4f6fa9 35%, #5581d2 100%); }
      </style>
      <svg class="wall" viewBox="0 0 2880 160">
        <defs>
          <filter id="ll" x="0" y="0" width="100%" height="100%"><feTurbulence type="fractalNoise" baseFrequency=".045 .03" numOctaves="5" seed="3"/><feColorMatrix values="0 0 0 0 .23  0 0 0 0 .42  0 0 0 0 .76  2 0 0 0 -.82"/></filter>
          <filter id="ld" x="0" y="0" width="100%" height="100%"><feTurbulence type="fractalNoise" baseFrequency=".06 .04" numOctaves="4" seed="11"/><feColorMatrix values="0 0 0 0 .03  0 0 0 0 .08  0 0 0 0 .22  3 0 0 0 -1.350"/></filter>
          <filter id="rl" x="0" y="0" width="100%" height="100%"><feTurbulence type="fractalNoise" baseFrequency=".03 .1" numOctaves="5" seed="5"/><feColorMatrix values="0 0 0 0 .34  0 0 0 0 .40  0 0 0 0 .66  2.600 0 0 0 -1.300"/></filter>
          <linearGradient id="top" x1="0" y1="0" x2="0" y2="1"><stop offset="0" stop-color="#030714" stop-opacity=".92"/><stop offset=".42" stop-color="#030714" stop-opacity="0"/></linearGradient>
        </defs>
        <rect width="330" height="160" fill="#1c4690"/><rect width="330" height="160" filter="url(#ll)"/><rect width="330" height="160" filter="url(#ld)"/>
        <rect x="2550" width="330" height="160" fill="#141f5c"/><rect x="2550" width="330" height="160" filter="url(#rl)"/>
        <rect width="2880" height="160" fill="url(#top)"/>
      </svg>
      <div class="bar"><slot></slot></div>`;
  }
}

class DockItem extends HTMLElement {
  constructor() {
    super();
    this.attachShadow({ mode: 'open' }).innerHTML = `
      <style>
        :host { display: flex; flex-direction: column; align-items: center; width: 135.800px; flex: none; }
        i { display: block; width: 8px; height: 10px; margin-top: 1px; border-radius: 50%; background: #04105c; visibility: hidden; }
        :host([running]) i { visibility: visible; }
      </style>
      <slot></slot><i></i>`;
  }
}

class DockSep extends HTMLElement {
  constructor() {
    super();
    this.attachShadow({ mode: 'open' }).innerHTML = `
      <style>
        :host { display: block; flex: none; width: 61px; height: 120px; margin-top: 20px; background: linear-gradient(#45598f, #45598f) center / 2px 100% no-repeat; }
      </style>`;
  }
}

customElements.define('mac-menubar', MacMenubar);
customElements.define('browser-window', BrowserWindow);
customElements.define('tab-strip', TabStrip);
customElements.define('browser-tab', BrowserTab);
customElements.define('browser-toolbar', BrowserToolbar);
customElements.define('bookmark-bar', BookmarkBar);
customElements.define('book-mark', BookMark);
customElements.define('page-nav', PageNav);
customElements.define('page-main', PageMain);
customElements.define('stat-row', StatRow);
customElements.define('purchase-button', PurchaseButton);
customElements.define('mac-dock', MacDock);
customElements.define('dock-item', DockItem);
customElements.define('dock-sep', DockSep);
</script>
</body>
</html>
